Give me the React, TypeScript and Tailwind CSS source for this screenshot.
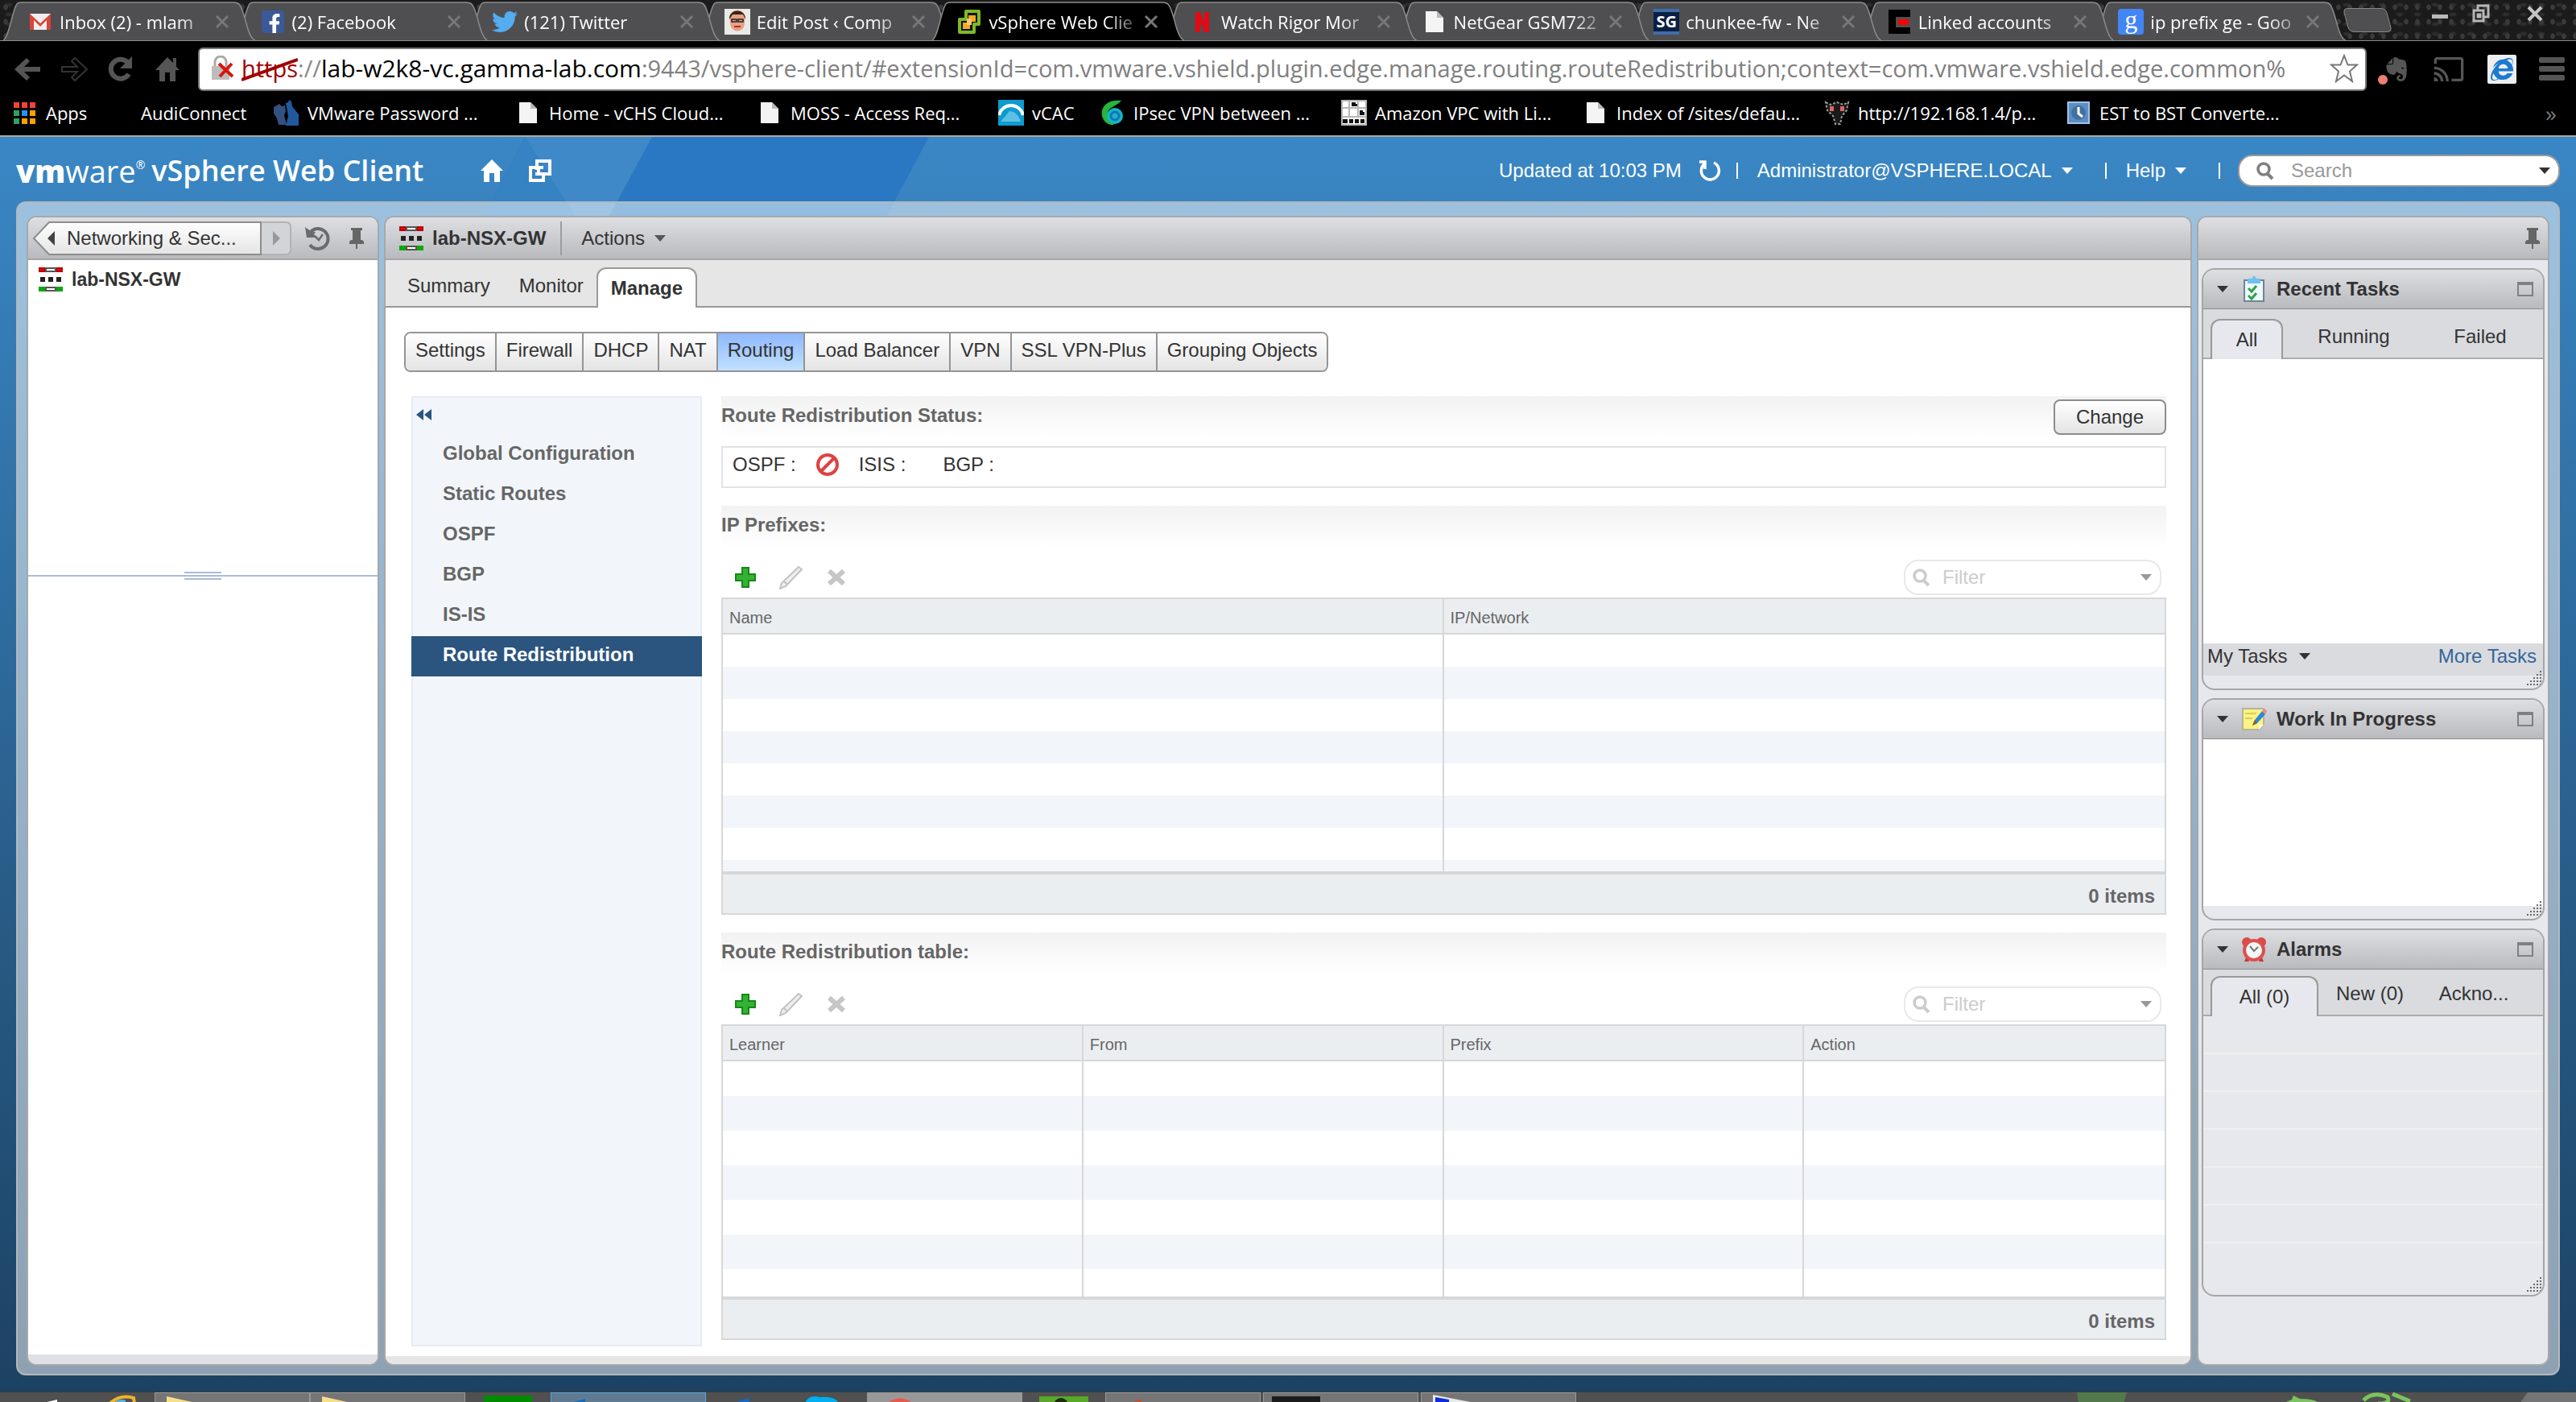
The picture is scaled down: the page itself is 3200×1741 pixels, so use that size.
import { ReactNode, useState } from "react";
import {
  FaEvernote,
  FaFacebookF,
  FaInternetExplorer,
  FaTwitter,
} from "react-icons/fa";
import { MdCast } from "react-icons/md";

const PageIcon = () => (
  <svg viewBox="0 0 32 32" className="size-8">
    <path d="M5 3h14l8 8v18H5z" fill="#f4f4f4" />
    <path d="M19 3v8h8z" fill="#b8b8b8" />
  </svg>
);

const Caret = ({ className }: { className?: string }) => (
  <svg viewBox="0 0 14 8" className={`h-2 w-3.5 shrink-0 ${className ?? ""}`}>
    <path d="M0 0h14L7 8z" fill="currentColor" />
  </svg>
);

const SearchIcon = ({ className }: { className?: string }) => (
  <svg viewBox="0 0 24 24" className={`size-6 shrink-0 ${className ?? ""}`}>
    <circle
      cx="10"
      cy="10"
      r="7"
      fill="none"
      stroke="currentColor"
      strokeWidth="3.5"
    />
    <path d="M14 15l7 7" stroke="currentColor" strokeWidth="4" />
  </svg>
);

const PinIcon = () => (
  <svg viewBox="0 0 18 28" className="h-7 w-[18px]">
    <path d="M2 1h14v3h-2v12h2l2 2v3H0v-3l2-2h2V4H2z" fill="#666" />
    <path d="M8 20h2v7H8z" fill="#666" />
  </svg>
);

const HistoryIcon = () => (
  <svg viewBox="0 0 34 34" className="size-[34px]">
    <path
      d="M7 10a12.500 12.500 0 1 1 0 15"
      fill="none"
      stroke="#6b6b6b"
      strokeWidth="4"
    />
    <path d="M1 3l2 13h13l-4-4 2-3-6-1z" fill="#6b6b6b" />
    <path d="M13 14l5 5 5-7" fill="none" stroke="#6b6b6b" strokeWidth="2.500" />
  </svg>
);

const EdgeIcon = () => (
  <svg viewBox="0 0 30 30" className="size-[30px] shrink-0">
    <path d="M0 0h30v6H0z" fill="#b30000" />
    <path d="M2 2h5v2H2zM23 2h5v2h-5z" fill="#f00" />
    <path d="M8 0h14v6H8z" fill="#555" />
    <path d="M10 2h10v2H10z" fill="#fff" />
    <path d="M2 12h6v6H2zM12 12h6v6h-6zM22 12h6v6h-6z" fill="#222" />
    <path d="M0 24h30v6H0z" fill="#0aa80a" />
    <path d="M8 24h14v6H8z" fill="#555" />
    <path d="M10 26h10v2H10z" fill="#fff" />
  </svg>
);

const GmailIcon = () => (
  <svg viewBox="0 0 32 32" className="size-8">
    <path d="M3 6h26v20H3z" fill="#eee" />
    <path d="M3 26V6l13 12L29 6v20h-5V14l-8 8-8-8v12z" fill="#db4437" />
  </svg>
);

const FacebookIcon = () => (
  <span className="flex h-[28px] w-[28px] items-end justify-end overflow-hidden rounded-sm bg-[#3b5998] text-white">
    <FaFacebookF size={24} />
  </span>
);

const FaceIcon = () => (
  <svg viewBox="0 0 32 32" className="size-8">
    <path d="M0 0h32v32H0z" fill="#e9e9e6" />
    <path d="M7 12c0-14 18-14 18 0v5c0 14-18 14-18 0z" fill="#e8a183" />
    <path d="M6 13C5-1 27-1 26 13l-3-6H10z" fill="#3b2418" />
    <path
      d="M9 13h6v3H9zM17 13h6v3h-6z"
      fill="none"
      stroke="#222"
      strokeWidth="1.500"
    />
    <path d="M12 22h8" stroke="#a33" strokeWidth="2" />
  </svg>
);

const VsphereIcon = () => (
  <svg viewBox="0 0 32 32" className="size-8">
    <path
      d="M12 3h16v16h-6v10H4V13h8z"
      fill="#111"
      stroke="#7dba28"
      strokeWidth="4"
      strokeLinejoin="round"
    />
    <path d="M15 8h9v8h-9zM8 17h9v8H8z" fill="#f7a823" />
    <path d="M13 12h6v8h-6z" fill="#f7c873" />
  </svg>
);

const NetflixIcon = () => (
  <svg viewBox="0 0 32 32" className="size-8">
    <path d="M8 4h6l5 13V4h6v25h-6l-5-13v13H8z" fill="#e50914" />
  </svg>
);

const SgIcon = () => (
  <span className="flex size-8 items-center justify-center border-t-4 border-b-4 border-[#3f6ea8] bg-[#0b1f42] text-[20px] font-bold text-white">
    SG
  </span>
);

const LinkedIcon = () => (
  <svg viewBox="0 0 32 32" className="size-8">
    <path d="M3 1h27v30H3z" fill="#000" />
    <path d="M12 10h18v13H12z" fill="#4f4f51" />
    <path d="M15 13h13v7H15z" fill="#f00" />
  </svg>
);

const GoogleIcon = () => (
  <span className="flex size-8 items-center justify-center rounded-sm bg-[#4285f4] pb-1.5 font-['Liberation_Serif',serif] text-[32px] leading-none text-white">
    g
  </span>
);

const browserTabs = [
  { title: "Inbox (2) - mlam", icon: <GmailIcon /> },
  { title: "(2) Facebook", icon: <FacebookIcon /> },
  { title: "(121) Twitter", icon: <FaTwitter size={32} color="#55acee" /> },
  { title: "Edit Post ‹ Comp", icon: <FaceIcon /> },
  { title: "vSphere Web Clie", icon: <VsphereIcon />, active: true },
  { title: "Watch Rigor Mor", icon: <NetflixIcon /> },
  { title: "NetGear GSM722", icon: <PageIcon /> },
  { title: "chunkee-fw - Ne", icon: <SgIcon /> },
  { title: "Linked accounts", icon: <LinkedIcon /> },
  { title: "ip prefix ge - Goo", icon: <GoogleIcon /> },
];

const bookmarks = [
  {
    label: "Apps",
    width: "w-[118px]",
    icon: (
      <svg viewBox="0 0 32 32" className="size-8">
        <path d="M2 3h7v7H2zM12 3h7v7h-7zM22 3h7v7h-7z" fill="#f44336" />
        <path d="M2 13h7v7H2z" fill="#34a05f" />
        <path d="M12 13h7v7h-7z" fill="#2196f3" />
        <path d="M22 13h7v7h-7zM12 23h7v7h-7zM22 23h7v7h-7z" fill="#ffa000" />
        <path d="M2 23h7v7H2z" fill="#34a05f" />
      </svg>
    ),
  },
  { label: "AudiConnect", width: "w-[207px]", icon: null },
  {
    label: "VMware Password ...",
    width: "w-[300px]",
    icon: (
      <svg viewBox="0 0 32 32" className="size-8">
        <path d="M0 9l7-4 3 3 4-1 1 7-2 5 3 12H6l-2-8-4-6z" fill="#34507c" />
        <path d="M15 4l3-1 1-3 3 2 1 6 3 4 5 6v14H15l3-12z" fill="#22589e" />
      </svg>
    ),
  },
  { label: "Home - vCHS Cloud...", width: "w-[300px]", icon: <PageIcon /> },
  { label: "MOSS - Access Req...", width: "w-[300px]", icon: <PageIcon /> },
  {
    label: "vCAC",
    width: "w-[126px]",
    icon: (
      <svg viewBox="0 0 32 32" className="size-8">
        <path d="M0 0h32v32H0z" fill="#0e9bd0" />
        <path d="M1 19C5 3 27 3 31 19" fill="none" stroke="#fff" strokeWidth="4" />
        <path d="M3 27l11-13c7 0 12 6 14 13z" fill="#5cc0e4" />
      </svg>
    ),
  },
  {
    label: "IPsec VPN between ...",
    width: "w-[300px]",
    icon: (
      <svg viewBox="0 0 32 32" className="size-8">
        <path d="M27 1C8-1 1 10 3 20c2 9 10 12 15 11L10 19C9 9 20 9 27 1z" fill="#27b53c" />
        <circle cx="19" cy="20" r="10" fill="#13b8c4" />
        <circle cx="19" cy="20" r="5" fill="none" stroke="#1d6fb8" strokeWidth="3" />
      </svg>
    ),
  },
  {
    label: "Amazon VPC with Li...",
    width: "w-[300px]",
    icon: (
      <svg viewBox="0 0 32 32" className="size-8">
        <path d="M0 0h32v32H0z" fill="#fff" />
        <path
          d="M0 10h32M0 21h32M10 0v21M21 0v21M1 1h30v30H1z"
          fill="none"
          stroke="#b5b5b5"
          strokeWidth="2"
        />
        <path
          d="M13 3h5v2h2v3h-7zM23 13h4v2h2v4h-6zM2 24h6v5H2zM10 24h5v5h-5zM17 24h5v5h-5zM24 24h5v5h-5z"
          fill="#111"
        />
      </svg>
    ),
  },
  { label: "Index of /sites/defau...", width: "w-[300px]", icon: <PageIcon /> },
  {
    label: "http://192.168.1.4/p...",
    width: "w-[300px]",
    icon: (
      <svg viewBox="0 0 32 32" className="size-8">
        <path
          d="M2 3l6 3 8-3 8 3 6-3-2 10-6 7-2 10h-6l-3-10-7-7z"
          fill="#1a1a1a"
          stroke="#999"
          strokeWidth="2"
          strokeDasharray="3 2"
        />
        <path d="M7 8h5v6H7zM20 8h5v6h-5z" fill="#d66" />
      </svg>
    ),
  },
  {
    label: "EST to BST Converte...",
    width: "w-[300px]",
    icon: (
      <svg viewBox="0 0 32 32" className="size-8">
        <path d="M3 3h26v26H3z" fill="#5b8fc4" stroke="#9fc3e8" strokeWidth="2" />
        <circle cx="16" cy="16" r="9" fill="#456f9f" />
        <path d="M16 9v8l5 4" stroke="#fff" strokeWidth="3" fill="none" />
      </svg>
    ),
  },
];

const subTabs = [
  "Settings",
  "Firewall",
  "DHCP",
  "NAT",
  "Routing",
  "Load Balancer",
  "VPN",
  "SSL VPN-Plus",
  "Grouping Objects",
];

const routingPages = [
  "Global Configuration",
  "Static Routes",
  "OSPF",
  "BGP",
  "IS-IS",
  "Route Redistribution",
];

function BrowserTab({
  title,
  icon,
  active,
  order,
}: {
  title: string;
  icon: ReactNode;
  active?: boolean;
  order: number;
}) {
  return (
    <div
      className="relative flex h-12 min-w-0 flex-1 items-center pt-0.5 pr-5 pl-[18px]"
      style={{ zIndex: active ? 20 : order }}
    >
      <svg
        viewBox="0 0 313 48"
        preserveAspectRatio="none"
        className="absolute inset-y-0 -left-3 h-12 w-[calc(100%+24px)]"
      >
        <path
          d="M0 48C8 44 12 5 18 2Q19 1 24 1H286Q292 1 294 4C301 12 303 44 313 48"
          fill={active ? "#000" : "#4f4f51"}
          stroke="#8c8c8c"
          strokeWidth="1.5"
        />
      </svg>
      <span className="relative flex size-8 shrink-0 items-center justify-center">
        {icon}
      </span>
      <span className="relative ml-2 min-w-0 flex-1 text-[22px] leading-8 whitespace-nowrap text-white [mask-image:linear-gradient(to_right,#000_80%,#0004)]">
        {title}
      </span>
      <button
        aria-label={`Close ${title}`}
        className="relative ml-2.5 size-[18px] shrink-0 text-[#777]"
      >
        <svg viewBox="0 0 18 18">
          <path d="M2 2l14 14M16 2L2 16" stroke="currentColor" strokeWidth="3" />
        </svg>
      </button>
    </div>
  );
}

function BrowserChrome() {
  return (
    <header className="border-b-2 border-[#a9a9a9] bg-black font-['Open_Sans','Noto_Sans',sans-serif]">
      <div className="flex items-start border-b border-[#8c8c8c] bg-[#1b1b1b] bg-[radial-gradient(#3a3a3a_25%,transparent_30%),radial-gradient(#2d2d2d_20%,transparent_35%)] bg-[size:14px_18px,22px_12px] pt-0.5 pl-4">
        <div className="flex min-w-0 flex-1">
          {browserTabs.map((tab, i) => (
            <BrowserTab key={tab.title} {...tab} order={10 - i} />
          ))}
        </div>
        <div className="flex w-[298px] items-start justify-between pl-3">
          <button
            aria-label="New tab"
            className="mt-2 h-[30px] w-[54px] skew-x-[15deg] rounded-md border border-[#888] bg-[#4f4f51]"
          />
          <div className="flex items-center pt-0.5 pr-10">
            <button aria-label="Minimize">
              <svg viewBox="0 0 22 26" className="h-[26px] w-[22px]">
                <path d="M1 14h20v5H1z" fill="#b8b8b8" />
              </svg>
            </button>
            <button aria-label="Restore" className="ml-7">
              <svg viewBox="0 0 24 26" className="h-[26px] w-6">
                <path
                  d="M8 8V3h13v14h-5M3 9h12v13H3zM8 14h3v3H8z"
                  fill="none"
                  stroke="#b8b8b8"
                  strokeWidth="3"
                />
              </svg>
            </button>
            <button aria-label="Close window" className="ml-11">
              <svg viewBox="0 0 22 26" className="h-[26px] w-[22px]">
                <path d="M3 5l16 16M19 5L3 21" stroke="#c4c4c4" strokeWidth="4" />
              </svg>
            </button>
          </div>
        </div>
      </div>

      <div className="flex h-[69px] items-center pr-3.5 pl-4 text-[#555]">
        <nav className="flex w-[230px] shrink-0 items-center gap-[22px]">
          <button aria-label="Back">
            <svg viewBox="0 0 36 36" className="size-9">
              <path d="M2 18L17 4l4 4-7 7h20v6H14l7 7-4 4z" fill="#555" />
            </svg>
          </button>
          <button aria-label="Forward">
            <svg viewBox="0 0 36 36" className="size-9">
              <path
                d="M34 18L19 4l-4 4 7 7H3v6h19l-7 7 4 4z"
                fill="none"
                stroke="#333"
                strokeWidth="2"
              />
            </svg>
          </button>
          <button aria-label="Reload">
            <svg viewBox="0 0 36 36" className="size-9">
              <path
                d="M28 24a12 12 0 1 1-1-14"
                fill="none"
                stroke="#555"
                strokeWidth="6"
              />
              <path d="M32 2v15H17z" fill="#555" />
            </svg>
          </button>
          <button aria-label="Home">
            <svg viewBox="0 0 36 36" className="size-9">
              <path d="M18 3L3 19h5v14h7V22h6v11h7V19h5l-4-4V4h-4v6z" fill="#555" />
            </svg>
          </button>
        </nav>
        <div className="flex h-[54px] min-w-0 flex-1 items-center rounded-md border-2 border-[#777] bg-white pr-2 pb-0.5 pl-3 text-[29px]">
          <svg viewBox="0 0 32 32" className="mr-2 size-8 shrink-0">
            <path d="M7 14V8a7 7 0 0 1 14 0v6" fill="none" stroke="#aaa" strokeWidth="3" />
            <path d="M3 13h22v17H3z" fill="#bcbcbc" />
            <path d="M12 10l17 16M28 10L13 26" stroke="#d8150c" strokeWidth="4" />
          </svg>
          <span className="relative text-[#a00000]">
            https
            <svg
              viewBox="0 0 70 30"
              className="absolute top-0 left-0 h-[30px] w-[70px]"
            >
              <path d="M0 28L70 3" stroke="#a00000" strokeWidth="4" />
            </svg>
          </span>
          <span className="text-[#888]">://</span>
          <span className="text-[30px] text-black">lab-w2k8-vc.gamma-lab.com</span>
          <input
            aria-label="Address"
            className="min-w-0 flex-1 text-[#808080] outline-none"
            defaultValue=":9443/vsphere-client/#extensionId=com.vmware.vshield.plugin.edge.manage.routing.routeRedistribution;context=com.vmware.vshield.edge.common%"
          />
          <button aria-label="Bookmark this page">
            <svg viewBox="0 0 36 36" className="size-9">
              <path
                d="M18 2l4.500 11.500H34l-9 8L28 34l-10-7.500L8 34l3-12.500-9-8h11.500z"
                fill="none"
                stroke="#777"
                strokeWidth="2"
              />
            </svg>
          </button>
        </div>
        <div className="ml-5 flex items-center gap-[28px]">
          <button aria-label="Evernote" className="relative">
            <FaEvernote size={34} />
            <span className="absolute -bottom-0.5 -left-1.5 size-3 rounded-full bg-[#f08070]" />
          </button>
          <button aria-label="Cast">
            <MdCast size={40} />
          </button>
          <button
            aria-label="IE Tab"
            className="flex size-9 items-center justify-center rounded-xs bg-[#eee] text-[#1a7ad0]"
          >
            <FaInternetExplorer size={28} />
          </button>
          <button aria-label="Menu" className="flex w-8 flex-col gap-1">
            <span className="h-[7px] rounded-xs bg-[#555]" />
            <span className="h-[7px] rounded-xs bg-[#555]" />
            <span className="h-[7px] rounded-xs bg-[#555]" />
          </button>
        </div>
      </div>

      <nav className="flex h-[48px] items-center pb-2 pl-[15px] text-[22px] text-white">
        {bookmarks.map((b) => (
          <a
            key={b.label}
            href="#"
            className={`flex shrink-0 items-center gap-2.5 whitespace-nowrap ${b.width}`}
          >
            <span className="flex size-8 shrink-0 items-center justify-center">
              {b.icon}
            </span>
            {b.label}
          </a>
        ))}
        <button
          aria-label="More bookmarks"
          className="mr-6 ml-auto text-[28px] leading-none text-[#777]"
        >
          »
        </button>
      </nav>
    </header>
  );
}

function AppHeader() {
  return (
    <div className="relative flex h-20 items-center pt-1 pr-5 pl-5 text-[24px] text-white">
      <h1 className="flex items-center font-['Open_Sans','Noto_Sans',sans-serif] text-[36px] leading-none font-semibold">
        <span className="text-[38px] font-extrabold">vm</span>
        <span className="text-[38px] font-normal">ware</span>
        <sup className="text-[14px] font-normal">®</sup>
        <span className="ml-2">vSphere Web Client</span>
      </h1>
      <button aria-label="Home" className="ml-[71px]">
        <svg viewBox="0 0 28 28" className="size-7">
          <path d="M14 0L0 14h4v14h7V17h6v11h7V14h4z" fill="#fff" />
        </svg>
      </button>
      <button aria-label="Open windows" className="ml-8">
        <svg viewBox="0 0 28 28" className="size-7">
          <path
            d="M10 13V2h16v16H14M8 10H2v16h16v-6M18 10h-6v8h-4"
            fill="none"
            stroke="#fff"
            strokeWidth="4"
          />
        </svg>
      </button>
      <div className="ml-auto flex items-center">
        <span>Updated at 10:03 PM</span>
        <button aria-label="Refresh" className="ml-5">
          <svg viewBox="0 0 32 32" className="size-8">
            <path
              d="M20 6a11 11 0 1 1-11 1M9 14V5H2"
              fill="none"
              stroke="#fff"
              strokeWidth="3.500"
            />
          </svg>
        </button>
        <span className="mr-6 ml-4 h-5 w-0.5 bg-white" />
        <button className="flex items-center gap-3">
          Administrator@VSPHERE.LOCAL
          <Caret />
        </button>
        <span className="mr-6 ml-10 h-5 w-0.5 bg-white" />
        <button className="flex items-center gap-3">
          Help
          <Caret />
        </button>
        <span className="mr-[22px] ml-10 h-5 w-0.5 bg-white" />
        <label className="flex h-10 w-[400px] items-center rounded-[18px] border-2 border-[#9a9a9a] bg-white pr-2.5 pl-5">
          <SearchIcon className="text-[#808080]" />
          <input
            aria-label="Search"
            placeholder="Search"
            className="ml-5 min-w-0 flex-1 text-[#333] outline-none placeholder:text-[#999]"
          />
          <Caret className="text-[#333]" />
        </label>
      </div>
    </div>
  );
}

function Panel({
  className,
  header,
  children,
}: {
  className: string;
  header: ReactNode;
  children: ReactNode;
}) {
  return (
    <section
      className={`flex flex-col overflow-hidden rounded-xl border-2 border-[#a6a8aa] ${className}`}
    >
      <div className="flex h-[53px] shrink-0 items-center border-b-2 border-[#a6a6a6] bg-linear-to-b from-[#dedfe3] to-[#b9babe]">
        {header}
      </div>
      {children}
    </section>
  );
}

function Navigator() {
  return (
    <Panel
      className="w-[438px] shrink-0 bg-white"
      header={
        <>
          <div className="relative ml-1.5 flex h-[42px] w-[321px] items-center">
            <svg viewBox="0 0 321 42" className="absolute inset-0">
              <defs>
                <linearGradient id="crumb" x2="0" y2="1">
                  <stop offset="0" stopColor="#fff" />
                  <stop offset="1" stopColor="#e4e4e4" />
                </linearGradient>
              </defs>
              <path
                d="M283 1h31q6 0 6 6v28q0 6-6 6h-31z"
                fill="#d3d4d8"
                stroke="#b3b3b3"
                strokeWidth="2"
              />
              <path
                d="M1 21L20 1h263v40H20z"
                fill="url(#crumb)"
                stroke="#8d8d8d"
                strokeWidth="2"
              />
              <path d="M18 21l9-9v18z" fill="#444" />
              <path d="M307 21l-9-9v18z" fill="#999" />
            </svg>
            <button className="relative ml-[42px] text-[24px] text-[#333]">
              Networking &amp; Sec...
            </button>
          </div>
          <button aria-label="History" className="ml-4">
            <HistoryIcon />
          </button>
          <button aria-label="Pin" className="ml-[22px]">
            <PinIcon />
          </button>
        </>
      }
    >
      <div className="h-[393px] shrink-0 border-b-2 border-[#a9bbd9] pt-[9px] pl-[13px]">
        <a
          href="#"
          className="flex items-center gap-[11px] text-[23px] font-bold text-[#333]"
        >
          <EdgeIcon />
          lab-NSX-GW
        </a>
      </div>
      <div className="relative flex-1">
        <span className="absolute -top-1.5 left-1/2 h-2.5 w-[46px] -translate-x-1/2 border-y-2 border-[#a9bbd9]" />
      </div>
      <div className="h-3 shrink-0 bg-[#dfe0e5]" />
    </Panel>
  );
}

function SectionTitle({
  title,
  children,
}: {
  title: string;
  children?: ReactNode;
}) {
  return (
    <div className="flex h-[52px] items-center justify-between bg-linear-to-b from-[#f2f2f2] to-white">
      <h2 className="pb-1 font-bold text-[#666]">{title}</h2>
      {children}
    </div>
  );
}

function GridToolbar() {
  return (
    <div className="flex h-[62px] items-center pt-3 pr-1.5 pl-4">
      <button aria-label="Add">
        <svg viewBox="0 0 28 28" className="size-7">
          <path
            d="M10 2h8v8h8v8h-8v8h-8v-8H2v-8h8z"
            fill="#35b135"
            stroke="#128a12"
            strokeWidth="2"
          />
        </svg>
      </button>
      <button aria-label="Edit" disabled className="ml-[28px]">
        <svg viewBox="0 0 30 30" className="size-[30px]">
          <path
            d="M1 29l2-7L24 2l4 3L8 26zM6 20l4 4"
            fill="#eee"
            stroke="#c2c2c2"
            strokeWidth="2"
          />
        </svg>
      </button>
      <button aria-label="Delete" disabled className="ml-[29px]">
        <svg viewBox="0 0 24 24" className="size-6">
          <path d="M3 4l18 16M21 4L3 20" stroke="#c6c6c6" strokeWidth="6" />
        </svg>
      </button>
      <label className="ml-auto flex h-11 w-[320px] items-center rounded-[18px] border-2 border-[#e8e8e8] pr-2.5 pl-2">
        <SearchIcon className="text-[#ccc]" />
        <input
          aria-label="Filter"
          placeholder="Filter"
          className="ml-3.5 min-w-0 flex-1 outline-none placeholder:text-[#ccc]"
        />
        <Caret className="text-[#999]" />
      </label>
    </div>
  );
}

function DataGrid({ columns, rows }: { columns: string[]; rows: string[] }) {
  return (
    <div className="border-2 border-[#d7d7d7]">
      <table className="w-full table-fixed border-separate border-spacing-0">
        <thead>
          <tr>
            {columns.map((col) => (
              <th
                key={col}
                className="h-11 border-r-2 border-b-2 border-[#d7d7d7] bg-[#ebeef1] px-2 pt-1 pb-0 text-left text-[20px] leading-none font-normal text-[#666] last:border-r-0"
              >
                {col}
              </th>
            ))}
          </tr>
        </thead>
        <tbody>
          {rows.map((height, i) => (
            <tr key={i} className="even:bg-[#f2f6fb]">
              {columns.map((col) => (
                <td
                  key={col}
                  className={`border-r-2 border-[#d7d7d7] p-0 last:border-r-0 ${height}`}
                />
              ))}
            </tr>
          ))}
        </tbody>
        <tfoot>
          <tr>
            <td
              colSpan={columns.length}
              className="h-[52px] border-t-4 border-[#d7d7d7] bg-[#ebeef1] pt-1.5 pr-3 pb-0 text-right leading-7 font-bold text-[#666]"
            >
              0 items
            </td>
          </tr>
        </tfoot>
      </table>
    </div>
  );
}

const prefixRows = [...Array(7).fill("h-10"), "h-3.5"];
const redistributionRows = [...Array(6).fill("h-[43px]"), "h-[34px]"];

function Workspace() {
  const [subTab, setSubTab] = useState("Routing");
  const [page, setPage] = useState("Route Redistribution");

  return (
    <Panel
      className="min-w-0 flex-1 bg-white"
      header={
        <>
          <span className="ml-[17px] flex items-center gap-[11px] font-bold text-[#333]">
            <EdgeIcon />
            lab-NSX-GW
          </span>
          <span className="mr-6 ml-[18px] h-[42px] w-0.5 bg-[#9d9da1]" />
          <button className="flex items-center gap-3 text-[#333]">
            Actions
            <Caret className="text-[#555]" />
          </button>
        </>
      }
    >
      <nav className="flex h-[59px] shrink-0 items-end border-b-2 border-[#999] bg-[#e6e6e6] text-[#333]">
        <button className="h-[50px] pr-[18px] pl-[27px]">Summary</button>
        <button className="h-[50px] pr-4 pl-[18px]">Monitor</button>
        <button className="-mb-0.5 h-[50px] rounded-t-xl border-2 border-b-0 border-[#999] bg-white px-4 font-bold">
          Manage
        </button>
      </nav>

      <div className="flex flex-1 flex-col px-[30px] pt-[30px] pb-3 pl-[23px]">
        <div className="flex h-[50px] self-start overflow-hidden rounded-lg border-2 border-[#949494]">
          {subTabs.map((tab) => (
            <button
              key={tab}
              onClick={() => setSubTab(tab)}
              className={`border-r-2 border-[#949494] px-3 pb-1 text-[#333] last:border-r-0 ${
                tab === subTab
                  ? "bg-linear-to-b from-[#8fb8ff] to-[#c1e1ff]"
                  : "bg-linear-to-b from-white to-[#e4e4e4]"
              }`}
            >
              {tab}
            </button>
          ))}
        </div>

        <div className="mt-[30px] ml-[9px] flex flex-1 gap-6">
          <aside className="w-[361px] shrink-0 border-2 border-[#e6ebf4] bg-[#f2f6fb]">
            <button
              aria-label="Collapse"
              className="flex h-[46px] w-full items-center pb-1 pl-1"
            >
              <svg viewBox="0 0 20 14" className="h-3.5 w-5">
                <path d="M9 0v14L0 7zM19 0v14l-9-7z" fill="#2b547f" />
              </svg>
            </button>
            {routingPages.map((item) => (
              <button
                key={item}
                onClick={() => setPage(item)}
                className={`-mx-0.5 block h-[50px] w-[361px] pb-1 pl-[39px] text-left font-bold ${
                  item === page ? "bg-[#2b547f] text-white" : "text-[#666]"
                }`}
              >
                {item}
              </button>
            ))}
          </aside>

          <div className="min-w-0 flex-1 pb-2">
            <SectionTitle title="Route Redistribution Status:">
              <button className="h-11 w-[140px] rounded-lg border-2 border-[#8d8d8d] bg-linear-to-b from-white to-[#e4e4e4] text-[#333]">
                Change
              </button>
            </SectionTitle>
            <div className="mt-2.5 flex h-[52px] items-center border-2 border-[#e3e3e3] pb-1.5 pl-3 text-[#333]">
              <span>OSPF :</span>
              <svg viewBox="0 0 30 30" className="ml-6 size-[30px]">
                <circle
                  cx="15"
                  cy="15"
                  r="12"
                  fill="#fff"
                  stroke="#dc4343"
                  strokeWidth="4"
                />
                <path d="M7 23L23 7" stroke="#dc4343" strokeWidth="4" />
              </svg>
              <span className="ml-6">ISIS :</span>
              <span className="ml-[46px]">BGP :</span>
            </div>

            <div className="mt-[22px]">
              <SectionTitle title="IP Prefixes:" />
              <GridToolbar />
              <DataGrid columns={["Name", "IP/Network"]} rows={prefixRows} />
            </div>

            <div className="mt-[22px]">
              <SectionTitle title="Route Redistribution table:" />
              <GridToolbar />
              <DataGrid
                columns={["Learner", "From", "Prefix", "Action"]}
                rows={redistributionRows}
              />
            </div>
          </div>
        </div>
      </div>
      <div className="h-2.5 shrink-0 bg-[#e6e6e6]" />
    </Panel>
  );
}

const TasksIcon = () => (
  <svg viewBox="0 0 28 34" className="h-[34px] w-7">
    <path d="M2 6h24v26H2z" fill="#eef8ff" stroke="#6d8496" strokeWidth="2" />
    <path d="M6 4h5l3-4 3 4h5v6H6z" fill="#6fc0ec" />
    <path
      d="M7 16l4 4 6-7M7 25l4 4 6-7"
      fill="none"
      stroke="#2fa04a"
      strokeWidth="3"
    />
  </svg>
);

const NoteIcon = () => (
  <svg viewBox="0 0 32 30" className="h-[30px] w-8">
    <path d="M2 2h26v20l-6 6H2z" fill="#fbf382" stroke="#b5b59a" strokeWidth="2" />
    <path d="M5 8h14M5 14h9" stroke="#d6cd6a" strokeWidth="2" />
    <path d="M28 22h-6v6z" fill="#fff" />
    <path d="M14 23l3-7L26 5l4 4-10 11z" fill="#2b8ad6" />
    <path d="M26 5l3-3 3 3-2 4z" fill="#e88" />
    <path d="M14 23l3-7 3 4z" fill="#8a5a30" />
  </svg>
);

const AlarmIcon = () => (
  <svg viewBox="0 0 32 32" className="size-8">
    <path d="M7 24l-3 7h6zM25 24l3 7h-6z" fill="#c93434" />
    <circle cx="7" cy="7" r="6" fill="#d94a4a" />
    <circle cx="25" cy="7" r="6" fill="#d94a4a" />
    <circle cx="16" cy="17" r="12" fill="#f5f5f5" stroke="#dc5050" strokeWidth="4" />
    <path d="M11 12l5 6 5-5" fill="none" stroke="#777" strokeWidth="2" />
  </svg>
);

function Portlet({
  title,
  icon,
  className,
  children,
}: {
  title: string;
  icon: ReactNode;
  className: string;
  children: ReactNode;
}) {
  return (
    <section
      className={`relative flex flex-col overflow-hidden rounded-[16px] border-2 border-[#a6a6a6] bg-[#e7e8ed] ${className}`}
    >
      <div className="flex h-[49px] shrink-0 items-center border-b border-[#8e8e8e] bg-linear-to-b from-[#dedfe3] to-[#b9babe] pr-3 pl-[17px] text-[#333]">
        <Caret />
        <span className="ml-4 flex w-8 justify-center">{icon}</span>
        <h2 className="ml-3 font-bold">{title}</h2>
        <button
          aria-label={`Maximize ${title}`}
          className="ml-auto h-[18px] w-5 border-2 border-t-4 border-[#808080]"
        />
      </div>
      {children}
      <svg viewBox="0 0 18 20" className="absolute right-0.5 bottom-0.5 h-5 w-[18px]">
        <path
          d="M17 0v20M13 4v16M9 8v12M5 12v8M1 16v4"
          stroke="#666"
          strokeWidth="2"
          strokeDasharray="2 2"
        />
      </svg>
    </section>
  );
}

const tabBar =
  "flex shrink-0 items-end border-b-2 border-[#a9abae] bg-[#dadbdf] pl-[9px] text-[#333]";
const activeTab =
  "-mb-0.5 rounded-t-xl border-2 border-b-0 border-[#999] bg-[#e7e8ed]";

function Sidebar() {
  return (
    <Panel
      className="w-[438px] shrink-0 bg-[#e7e8ed]"
      header={
        <button aria-label="Pin" className="mr-2.5 ml-auto">
          <PinIcon />
        </button>
      }
    >
      <div className="flex flex-col gap-2.5 px-1 pt-2.5">
        <Portlet title="Recent Tasks" icon={<TasksIcon />} className="h-[524px]">
          <div className={`h-[62px] ${tabBar}`}>
            <button className={`h-[50px] w-[90px] ${activeTab}`}>All</button>
            <button className="h-[50px] w-[176px] pb-0.5">Running</button>
            <button className="h-[50px] w-[138px] pb-0.5">Failed</button>
          </div>
          <div className="flex-1 bg-white" />
          <div className="flex h-10 shrink-0 items-center justify-between bg-[#dadbdf] pr-2 pb-2 pl-[5px]">
            <label className="flex items-center text-[#333]">
              <select
                aria-label="Task filter"
                className="w-[114px] appearance-none outline-none"
              >
                <option>My Tasks</option>
              </select>
              <Caret />
            </label>
            <a href="#" className="text-[#33669a]">
              More Tasks
            </a>
          </div>
          <div className="h-4 shrink-0" />
        </Portlet>

        <Portlet title="Work In Progress" icon={<NoteIcon />} className="h-[276px]">
          <div className="flex-1 bg-white" />
          <div className="h-4 shrink-0" />
        </Portlet>

        <Portlet title="Alarms" icon={<AlarmIcon />} className="h-[457px]">
          <div className={`h-[58px] ${tabBar}`}>
            <button className={`h-[50px] w-[134px] ${activeTab}`}>All (0)</button>
            <button className="h-[50px] w-[128px] pb-0.5">New (0)</button>
            <button className="h-[50px] w-[130px] pb-0.5">Ackno...</button>
          </div>
          <ul>
            {[1, 2, 3, 4, 5, 6].map((row) => (
              <li key={row} className="h-[47px] border-b-2 border-[#efefef]" />
            ))}
          </ul>
        </Portlet>
      </div>
    </Panel>
  );
}

const taskButton = "h-4 w-[193px] shrink-0 border border-[#999] pl-3.5";

function Taskbar() {
  return (
    <footer className="flex h-[13px] shrink-0 items-start overflow-hidden border-t border-[#3a3a3a] bg-[#505050]">
      <svg viewBox="0 0 192 14" className="h-3.5 w-[192px] shrink-0">
        <path d="M50 14l21-5v5z" fill="#fff" />
        <path d="M136 14q14-12 30-7l1 7" fill="none" stroke="#f0b429" strokeWidth="4" />
        <path d="M140 14q8-7 16-4v4z" fill="#58b3ea" />
      </svg>
      <button aria-label="Explorer" className={`bg-[#757575] ${taskButton}`}>
        <svg viewBox="0 0 36 14" className="h-3.5 w-9">
          <path d="M0 4l36 8v2H0z" fill="#f4e08a" />
        </svg>
      </button>
      <button aria-label="Files" className={`bg-[#757575] ${taskButton}`}>
        <svg viewBox="0 0 36 14" className="h-3.5 w-9">
          <path d="M0 4l36 8v2H0z" fill="#f4e08a" />
        </svg>
      </button>
      <span className="mx-[23px] mt-1 h-3 w-[60px] shrink-0 bg-[#008a00]" />
      <button
        aria-label="Outlook"
        className={`border-[#5aa6dd]! bg-[#607a91] ${taskButton}`}
      >
        <svg viewBox="0 0 36 14" className="h-3.5 w-9">
          <path d="M2 14l26-7v7z" fill="#0f6cc7" />
        </svg>
      </button>
      <svg viewBox="0 0 200 14" className="h-3.5 w-[200px] shrink-0">
        <path d="M30 14l24-7v7z" fill="#0f6cc7" />
        <path d="M123 14q4-12 18-8q20-2 24 8z" fill="#00aff0" />
      </svg>
      <button aria-label="Chrome" className={`bg-[#989898] ${taskButton}`}>
        <svg viewBox="0 0 60 14" className="h-3.5 w-[60px]">
          <path d="M8 14q18-15 36 0z" fill="#e8574a" />
        </svg>
      </button>
      <svg viewBox="0 0 103 14" className="h-3.5 w-[103px] shrink-0">
        <path d="M21 5h61v9H21z" fill="#58a927" />
        <circle cx="48" cy="16" r="9" fill="#1c2a12" />
      </svg>
      <button aria-label="PowerPoint" className={`bg-[#757575] ${taskButton}`}>
        <svg viewBox="0 0 36 14" className="h-3.5 w-9">
          <path d="M8 14l22-6v6z" fill="#d24726" />
        </svg>
      </button>
      <button aria-label="Terminal" className={`ml-[3px] bg-[#757575] ${taskButton}`}>
        <span className="mt-1 -ml-1 block h-3 w-[60px] bg-[#1b1b1b]" />
      </button>
      <button aria-label="Remote desktop" className={`ml-[3px] bg-[#757575] ${taskButton}`}>
        <svg viewBox="0 0 52 14" className="h-3.5 w-[52px]">
          <path d="M0 2l52 10v2H0z" fill="#e8e8e8" />
          <path d="M3 5l17 3v6H3z" fill="#0d2bdc" />
        </svg>
      </button>
      <svg viewBox="0 0 620 14" className="ml-auto h-3.5 w-[620px] shrink-0">
        <path d="M0 0h62l-4 14H2z" fill="#53784c" />
        <path d="M255 14l12-5 2-5 8 4q20 0 24 6z" fill="#7cc35e" />
        <path
          d="M356 10q12-12 30-4q4 8-12 8M392 2l22 9"
          fill="none"
          stroke="#7cc35e"
          strokeWidth="5"
        />
        <path d="M560 0h60v14h-70z" fill="#757577" />
      </svg>
    </footer>
  );
}

export default function App() {
  return (
    <div className="flex min-h-screen flex-col overflow-x-hidden font-['Liberation_Sans',Arial,sans-serif] text-[24px] leading-7">
      <BrowserChrome />
      <div className="relative flex flex-1 flex-col bg-linear-to-b from-[#3a87c5] to-[#1c4263]">
        <svg viewBox="0 0 1300 120" className="absolute top-0 left-0 h-[120px] w-[1300px]">
          <path d="M652 0H1154L1090 120H590z" fill="#2a78c3" />
          <path d="M652 0H810L745 120H728z" fill="#3f89c8" />
          <path d="M652 0L728 120H590z" fill="#3583c3" />
        </svg>
        <AppHeader />
        <main className="relative mx-5 mb-5 flex flex-1 gap-1.5 rounded-xl border-2 border-[#b3b7ba] bg-white/50 px-[11px] pt-4 pb-2.5">
          <Navigator />
          <Workspace />
          <Sidebar />
        </main>
      </div>
      <Taskbar />
    </div>
  );
}
